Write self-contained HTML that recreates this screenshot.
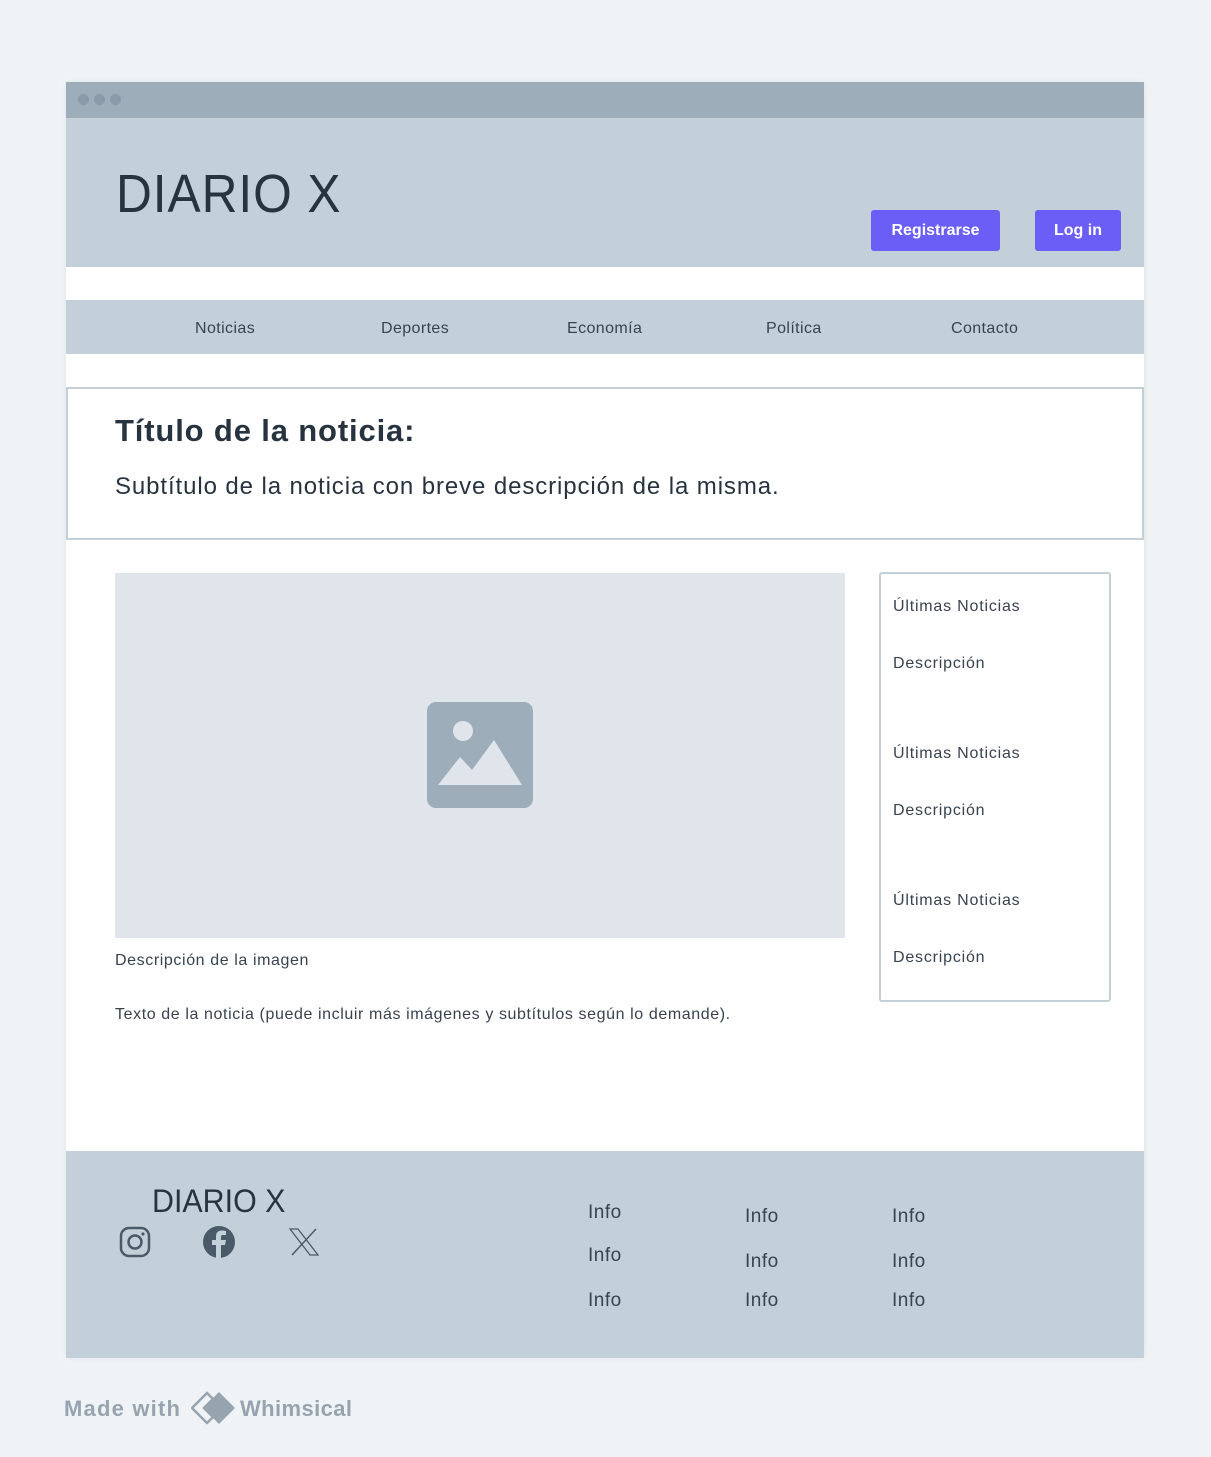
<!DOCTYPE html>
<html><head><meta charset="utf-8"><style>
*{margin:0;padding:0;box-sizing:border-box}
body{width:1211px;height:1457px;background:#eff3f6;font-family:"Liberation Sans",sans-serif;color:#2c3a47;position:relative;overflow:hidden}
.a{position:absolute}
.win{left:66px;top:82px;width:1078px;height:1276px;background:#fff;box-shadow:0 0 6px rgba(0,0,0,.06)}
.dot{width:11px;height:11px;border-radius:50%;background:#8a9aa8;top:94px}
.btn{background:#6a5ef6;color:#fff;font-size:16px;font-weight:bold;text-align:center;line-height:41px;border-radius:3px;top:210px;height:41px}
.nav{font-size:16px;top:320px;color:#37434f;letter-spacing:.4px}
.side{font-size:16px;color:#37434f;left:893px;letter-spacing:.8px}
.info{font-size:19px;color:#37434f;letter-spacing:.5px}
</style></head><body>
<div class="a win"></div>
<div class="a" style="left:66px;top:82px;width:1078px;height:36px;background:#9eadba"></div>
<div class="a dot" style="left:78px"></div><div class="a dot" style="left:94px"></div><div class="a dot" style="left:110px"></div>
<div class="a" style="left:66px;top:118px;width:1078px;height:149px;background:#c4d0d9"></div>
<div class="a" style="left:116px;top:163px;font-size:54px;color:#27333f;letter-spacing:1px;transform:scaleX(.92);transform-origin:left">DIARIO X</div>
<div class="a btn" style="left:871px;width:129px">Registrarse</div>
<div class="a btn" style="left:1035px;width:86px">Log in</div>
<div class="a" style="left:66px;top:300px;width:1078px;height:54px;background:#c4d0d9"></div>
<div class="a nav" style="left:195px">Noticias</div>
<div class="a nav" style="left:381px">Deportes</div>
<div class="a nav" style="left:567px">Economía</div>
<div class="a nav" style="left:766px">Política</div>
<div class="a nav" style="left:951px">Contacto</div>
<div class="a" style="left:66px;top:387px;width:1078px;height:153px;border:2px solid #c4d0d9"></div>
<div class="a" style="left:115px;top:413px;font-size:31px;font-weight:bold;color:#27333f;letter-spacing:.85px">Título de la noticia:</div>
<div class="a" style="left:115px;top:473px;font-size:24px;color:#27333f;letter-spacing:.9px">Subtítulo de la noticia con breve descripción de la misma.</div>
<div class="a" style="left:115px;top:573px;width:730px;height:365px;background:#e0e5ec"></div>
<svg class="a" style="left:427px;top:702px" width="106" height="106" viewBox="0 0 106 106"><rect width="106" height="106" rx="9" fill="#9eadba"/><circle cx="36" cy="29" r="10" fill="#e0e5ec"/><path d="M11 83 L33 55 L45 68 L67 38 L95 83 Z" fill="#e0e5ec"/></svg>
<div class="a" style="left:115px;top:952px;font-size:16px;color:#37434f;letter-spacing:.6px">Descripción de la imagen</div>
<div class="a" style="left:115px;top:1006px;font-size:16px;color:#37434f;letter-spacing:.6px">Texto de la noticia (puede incluir más imágenes y subtítulos según lo demande).</div>
<div class="a" style="left:879px;top:572px;width:232px;height:430px;border:2px solid #c4d0d9;border-radius:3px"></div>
<div class="a side" style="top:598px">Últimas Noticias</div>
<div class="a side" style="top:655px">Descripción</div>
<div class="a side" style="top:745px">Últimas Noticias</div>
<div class="a side" style="top:802px">Descripción</div>
<div class="a side" style="top:892px">Últimas Noticias</div>
<div class="a side" style="top:949px">Descripción</div>
<div class="a" style="left:66px;top:1151px;width:1078px;height:207px;background:#c4d0d9"></div>
<div class="a" style="left:152px;top:1183px;font-size:32px;color:#27333f;transform:scaleX(.95);transform-origin:left">DIARIO X</div>
<svg class="a" style="left:119px;top:1226px" width="32" height="32" viewBox="0 0 32 32"><rect x="2" y="2" width="28" height="28" rx="8" fill="none" stroke="#4a5a68" stroke-width="2.5"/><circle cx="16" cy="16" r="6.5" fill="none" stroke="#4a5a68" stroke-width="2.5"/><circle cx="24" cy="8" r="1.6" fill="#4a5a68"/></svg>
<svg class="a" style="left:202px;top:1225px" width="34" height="34" viewBox="0 0 34 34"><circle cx="17" cy="17" r="16" fill="#4a5a68"/><path d="M19 34 V20 H23 L24 15 H19 V12 Q19 10 21 10 H24 V6 Q22 5.5 20 5.5 Q14 5.5 14 11.5 V15 H10 V20 H14 V34 Z" fill="#c4d0d9"/></svg>
<svg class="a" style="left:289px;top:1228px" width="30" height="28" viewBox="0 0 30 28"><path d="M1 1 H9 L29 27 H21 Z" fill="none" stroke="#4a5a68" stroke-width="1.3"/><path d="M27 1 L3 27" stroke="#4a5a68" stroke-width="1.5"/></svg>
<div class="a info" style="left:588px;top:1202px">Info</div>
<div class="a info" style="left:588px;top:1245px">Info</div>
<div class="a info" style="left:588px;top:1290px">Info</div>
<div class="a info" style="left:745px;top:1206px">Info</div>
<div class="a info" style="left:745px;top:1251px">Info</div>
<div class="a info" style="left:745px;top:1290px">Info</div>
<div class="a info" style="left:892px;top:1206px">Info</div>
<div class="a info" style="left:892px;top:1251px">Info</div>
<div class="a info" style="left:892px;top:1290px">Info</div>
<div class="a" style="left:64px;top:1396px;font-size:22px;font-weight:bold;color:#97a4b0;letter-spacing:1.2px">Made with</div>
<svg class="a" style="left:191px;top:1391px" width="46" height="34" viewBox="0 0 46 34"><path d="M16 2 L1 17 L16 32 L22 26 L13 17 L22 8 Z" fill="none" stroke="#97a4b0" stroke-width="2.5"/><path d="M28 1 L44 17 L28 33 L12 17 Z" fill="#97a4b0"/></svg>
<div class="a" style="left:240px;top:1396px;font-size:22px;font-weight:bold;color:#97a4b0;letter-spacing:.4px">Whimsical</div>
</body></html>
